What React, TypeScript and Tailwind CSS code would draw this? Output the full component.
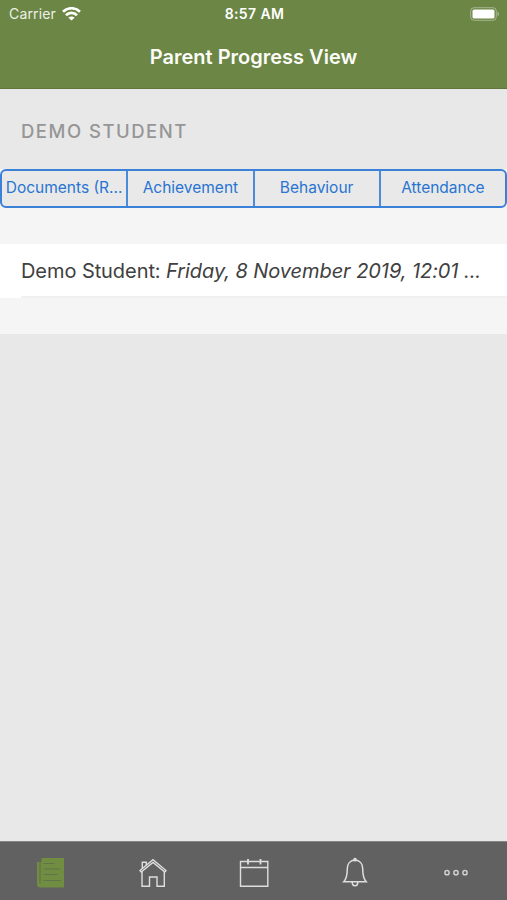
import { useState } from 'react';
import type { ReactNode } from 'react';

const segments = ['Documents (R...', 'Achievement', 'Behaviour', 'Attendance'];

function WifiIcon() {
  return (
    <svg width="19" height="14" viewBox="0 0 19 14" fill="none" stroke="white" strokeWidth="2.7">
      <path d="M1 4.7a12.2 12.2 0 0 1 17 0" />
      <path d="M4 8.2a7.7 7.7 0 0 1 11 0" />
      <path d="M9.5 13.6 6.4 10.7a4.4 4.4 0 0 1 6.2 0z" fill="white" stroke="none" />
    </svg>
  );
}

function BatteryIcon() {
  return (
    <svg width="30" height="14" viewBox="0 0 30 14" fill="none">
      <rect x="0.7" y="0.7" width="25.6" height="12.6" rx="3.4" stroke="white" strokeOpacity="0.4" />
      <rect x="2.5" y="2.5" width="22" height="9" rx="1.6" fill="white" />
      <path d="M27.6 4.8c1.6.6 1.6 3.8 0 4.400z" fill="white" fillOpacity="0.5" />
    </svg>
  );
}

function DocumentsIcon() {
  return (
    <svg width="30" height="32" viewBox="0 0 30 32" fill="none">
      <path d="M5.5 1H28v29.5H4.5A3.5 3.5 0 0 1 1 27V5h4.5z" fill="#718d41" />
      <path d="M4 4v22.5" stroke="#606d4d" />
      <path d="M7.5 6.5h11M7.5 12h17M7.5 17.5h14M7.5 23.5h17.5" stroke="#5f744b" strokeWidth="1.2" />
    </svg>
  );
}

function HomeIcon() {
  return (
    <svg width="30" height="32" viewBox="0 0 30 32" fill="none" stroke="#dedede" strokeWidth="1.4">
      <path d="M2 13.5 15 2.600l13 10.900-1.200 1.500L15 5.400 3.200 15z" />
      <path d="M4.300 11.400V5.300h4v2.800M4 14.500v14.800h7.500V20h7.500v9.300h7.300V14.500" />
    </svg>
  );
}

function CalendarIcon() {
  return (
    <svg width="30" height="32" viewBox="0 0 30 32" fill="none" stroke="#dedede" strokeWidth="1.4">
      <path d="M1.5 4.5h27.3v24.8H1.5zM1.5 10.5h27.3" />
      <path d="M9 2v5.5M21.500 2v5.5" strokeWidth="1.8" />
    </svg>
  );
}

function BellIcon() {
  return (
    <svg width="30" height="32" viewBox="0 0 30 32" fill="none" stroke="#dedede" strokeWidth="1.5">
      <path d="M15 3c-4.9.3-7.7 4-7.7 8.5 0 7-.8 10.300-3.500 13.200h22.400c-2.700-2.900-3.500-6.200-3.500-13.200C22.700 7 19.900 3.300 15 3z" />
      <path d="M12.200 25c0 5 5.600 5 5.600 0" />
      <circle cx="15" cy="2.700" r="1.100" fill="#dedede" />
    </svg>
  );
}

function MoreIcon() {
  return (
    <svg width="30" height="32" viewBox="0 0 30 32" fill="none" stroke="#d0d0d0" strokeWidth="1.5">
      <circle cx="5" cy="15.700" r="2.100" />
      <circle cx="14" cy="15.700" r="2.100" />
      <circle cx="23" cy="15.700" r="2.100" />
    </svg>
  );
}

const tabs: { label: string; icon: ReactNode }[] = [
  { label: 'Documents', icon: <DocumentsIcon /> },
  { label: 'Home', icon: <HomeIcon /> },
  { label: 'Calendar', icon: <CalendarIcon /> },
  { label: 'Notifications', icon: <BellIcon /> },
  { label: 'More', icon: <MoreIcon /> },
];

function App() {
  const [, setSegment] = useState(0);

  return (
    <div className="flex h-[900px] w-[507px] flex-col overflow-hidden bg-[#e8e8e8] font-['Inter',sans-serif]">
      {/* Status bar and title */}
      <header className="h-[89px] shrink-0 border-b border-[#5f753c] bg-[#6c8645] text-white">
        <div className="grid h-[27px] grid-cols-3 items-center pr-[7px] pl-[9px]">
          <div className="flex items-center gap-[6px]">
            <span className="text-[14px] tracking-[0.15px] text-[#edf1e6]">Carrier</span>
            <WifiIcon />
          </div>
          <span className="text-center text-[14px] font-semibold tracking-[0.4px]">8:57 AM</span>
          <div className="flex justify-end">
            <BatteryIcon />
          </div>
        </div>
        <h1 className="pt-[15px] text-center text-[20px] leading-[30px] font-semibold text-[#fbfcf8]">
          Parent Progress View
        </h1>
      </header>

      <main className="flex-1">
        <h2 className="h-[79.5px] pt-[27px] pl-[21px] text-[18.5px] leading-[30px] font-medium tracking-[1.5px] text-[#969696]">
          DEMO STUDENT
        </h2>

        {/* Segmented control */}
        <div className="h-[39.5px] bg-[#f5f5f5]">
          <div className="flex h-full overflow-hidden rounded-md border-2 border-[#3b81d8] bg-[#e9e9e9]">
            {segments.map((name, i) => (
              <button
                key={name}
                onClick={() => setSegment(i)}
                className="flex-1 border-r-2 border-[#4c8bd9] pb-0.5 text-[15.5px] whitespace-nowrap text-[#2874d2] last:border-r-0"
              >
                {name}
              </button>
            ))}
          </div>
        </div>

        {/* Document list */}
        <div className="bg-[#f5f5f5] pt-9 pb-[36px]">
          <div className="h-[54px] bg-white pl-[21px]">
            <p className="h-full border-b-2 border-[#f0f0f0] pt-3 text-[20px] leading-[30px] tracking-[-0.07px] whitespace-nowrap text-[#404040]">
              Demo Student: <em>Friday, 8 November 2019, 12:01 ...</em>
            </p>
          </div>
        </div>
      </main>

      {/* Tab bar */}
      <nav className="grid h-[59px] shrink-0 grid-cols-5 border-t border-[#858585] bg-[#616161]">
        {tabs.map((tab) => (
          <button key={tab.label} aria-label={tab.label} className="flex justify-center pt-[15px] pl-px">
            {tab.icon}
          </button>
        ))}
      </nav>
    </div>
  );
}

export default App;
